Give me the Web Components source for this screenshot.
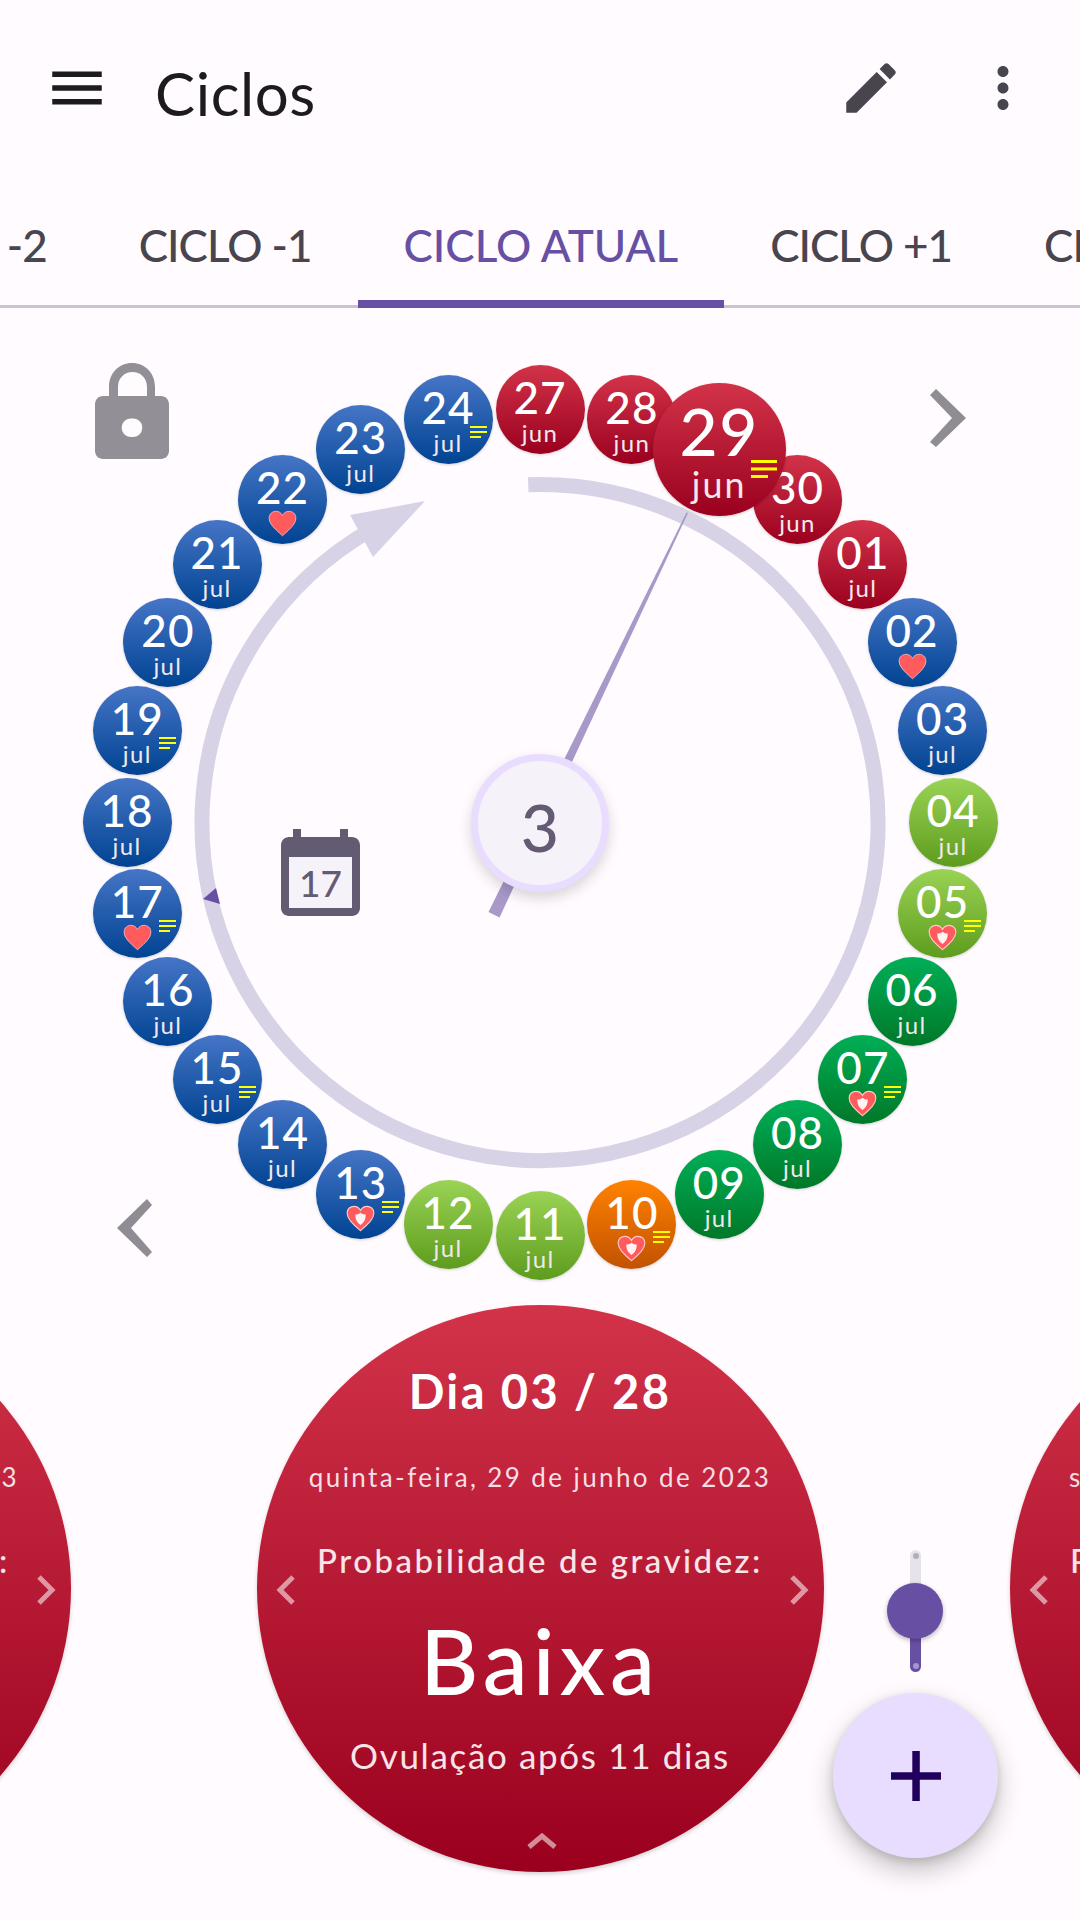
<!DOCTYPE html>
<html lang="pt"><head><meta charset="utf-8"><title>Ciclos</title>
<style>
html,body{margin:0;padding:0;background:#fffbfe}
body{width:1080px;height:1920px;overflow:hidden;font-family:"Lato","Noto Sans",sans-serif;display:flex;flex-direction:column}
</style></head><body>
<app-bar title="Ciclos"></app-bar>
<cycle-tabs></cycle-tabs>
<cycle-wheel></cycle-wheel>
<day-carousel></day-carousel>
<script>
const P={red:['#d23349','#9a001e'],blue:['#4675c6','#004392'],lime:['#9ad355','#5e9c1d'],green:['#00af57','#007828'],orange:['#ff8200','#c25200']};
function def(n,html,extra){customElements.define(n,class extends HTMLElement{constructor(){super();this.attachShadow({mode:'open'});}connectedCallback(){if(this._r)return;this._r=1;this.shadowRoot.innerHTML=typeof html==='function'?html(this):html;extra&&extra(this)}})}

def('app-bar',`<style>:host{display:flex;align-items:flex-start;height:165px;flex:none;position:relative;color:#1c1b1f}
.b{width:66px;height:66px;margin-top:55px;flex:none}svg{display:block;width:66px;height:66px}
h1{margin:54px 0 0 45px;font:400 60px/78px Lato,sans-serif;letter-spacing:.6px;flex:1}
</style>
<div class="b" style="margin-left:44px"><svg viewBox="0 0 24 24" fill="#1c1b1f"><path d="M3 18h18v-2H3v2zm0-5h18v-2H3v2zm0-7v2h18V6H3z"/></svg></div>
<h1>Ciclos</h1>
<div class="b"><svg viewBox="0 0 24 24" fill="#49454f"><path d="M3 17.25V21h3.75L17.81 9.94l-3.75-3.75L3 17.25zM20.71 7.04c.39-.39.39-1.02 0-1.41l-2.34-2.34c-.39-.39-1.02-.39-1.41 0l-1.83 1.83 3.75 3.75 1.83-1.83z"/></svg></div>
<div class="b" style="margin:55px 44px 0 66px"><svg viewBox="0 0 24 24" fill="#49454f"><path d="M12 8c1.1 0 2-.9 2-2s-.9-2-2-2-2 .9-2 2 .9 2 2 2zm0 2c-1.1 0-2 .9-2 2s.9 2 2 2 2-.9 2-2-.9-2-2-2zm0 6c-1.1 0-2 .9-2 2s.9 2 2 2 2-.9 2-2-.9-2-2-2z"/></svg></div>`);

def('tab-item',t=>`<style>:host{display:flex;flex:none;align-items:center;height:143px;padding:17px 46px 0;box-sizing:border-box;font:500 44px/1 Lato,sans-serif;color:#49454f;position:relative;white-space:nowrap;letter-spacing:-1px}
:host([active]){color:#6750a4;letter-spacing:0}
:host([active])::after{content:"";position:absolute;left:0;right:0;bottom:0;height:8px;background:#6750a4}
</style><slot></slot>`);

def('cycle-tabs',`<style>:host{display:flex;justify-content:center;flex:none;height:143px;box-sizing:border-box;overflow:hidden;position:relative}
:host::before{content:"";position:absolute;left:0;right:0;bottom:0;height:3px;background:#cac4d0}
.r{display:flex;flex:none;height:143px;position:relative;margin-left:20px}
</style><div class="r"><tab-item>CICLO -2</tab-item><tab-item>CICLO -1</tab-item><tab-item active>CICLO ATUAL</tab-item><tab-item>CICLO +1</tab-item><tab-item>CICLO +2</tab-item></div>`);

const HEART="M50 88 C20 62 4 46 4 27 C4 12 16 4 27 4 C37 4 45 9 50 18 C55 9 63 4 73 4 C84 4 96 12 96 27 C96 46 80 62 50 88Z";
def('day-node',t=>{
 const [a,b]=P[t.getAttribute('tone')||'red'],big=t.hasAttribute('big'),s=big?1.494:1,mark=t.getAttribute('mark')||'',lines=t.hasAttribute('lines');
 const d=89*s;
 let m='';
 if(mark==='heart')m=`<svg class="h" viewBox="0 0 100 92"><path d="${HEART}" fill="#ff5a5c" stroke="#f4b9bc" stroke-width="3"/></svg>`;
 else if(mark==='shield')m=`<svg class="h" viewBox="0 0 100 92"><path d="${HEART}" fill="#ff5a5c" stroke="#ffc9cb" stroke-width="4"/><path d="M50 26 C57 31 63 32 68 32 C68 50 62 60 50 68 C38 60 32 50 32 32 C37 32 43 31 50 26Z" fill="#fff" opacity=".92"/></svg>`;
 return `<style>:host{position:absolute;display:block;width:${d}px;height:${d}px;margin:${-d/2}px 0 0 ${-d/2}px;border-radius:50%;background:linear-gradient(${a},${b});box-shadow:0 1px 3px rgba(0,0,0,.18);color:#fff;font-family:Lato,sans-serif;z-index:${big?3:1}}
.n{position:absolute;left:0;right:0;top:${9*s}px;text-align:center;font:500 ${44*s}px/${46*s}px Lato,sans-serif;letter-spacing:${1*s}px}
.m{position:absolute;left:0;right:0;top:${55*s}px;text-align:center;font:400 ${24*s}px/${26*s}px Lato,sans-serif;letter-spacing:${1.4*s}px;color:#f1e8ec}
.h{position:absolute;left:${30*s}px;top:${55*s}px;width:${29*s}px;height:${27*s}px}
.l{position:absolute;left:${66*s}px;top:${51*s}px;width:${17*s}px;height:${2*s}px;background:#ff0;box-shadow:0 ${5*s}px 0 #ff0}
.l::after{content:"";position:absolute;left:0;top:${10*s}px;width:${11*s}px;height:${2*s}px;background:#ff0}
</style><div class="n"><slot></slot></div>${mark?'':`<div class="m">${t.getAttribute('month')||''}</div>`}${m}${lines?'<div class="l"></div>':''}`;
});

function arc(r,a0,a1,cx,cy){const p=a=>[cx+r*Math.sin(a*Math.PI/180),cy-r*Math.cos(a*Math.PI/180)];const [x0,y0]=p(a0),[x1,y1]=p(a1);return `M${x0} ${y0}A${r} ${r} 0 1 1 ${x1} ${y1}`}

const CX=540,CY=514.5;
def('cycle-wheel',`<style>:host{display:block;position:relative;flex:none;height:997px}
svg.bg{position:absolute;left:0;top:0;width:1080px;height:997px}
.hub{position:absolute;left:471px;top:445.5px;width:138px;height:138px;box-sizing:border-box;padding-top:8px;border-radius:50%;border:7px solid #e9ddff;background:#f5f2fa;box-shadow:0 6px 14px rgba(0,0,0,.16);display:flex;align-items:center;justify-content:center;color:#645a73;font:500 66px/1 Lato,sans-serif;z-index:2}
.cal{position:absolute;left:281px;top:521px;width:79px;height:87px}
.calt{position:absolute;left:289px;top:549px;width:63px;height:51px;display:flex;align-items:center;justify-content:center;font:500 37px/1 Lato,sans-serif;color:#625b71}
.ov{position:absolute}
</style>
<svg class="bg" viewBox="0 0 1080 997">
<path d="${arc(338,-2,329.8,CX,CY)}" fill="none" stroke="#d8d2e7" stroke-width="15"/>
<polygon points="425,193 350,207 373,249" fill="#d8d2e7"/>
<polygon points="203,591 216,580 220,596" fill="#6750a4"/>
<polygon points="488.5,604 499.5,609.5 688,205 686.5,204.5" fill="#a899c9"/>
<polygon points="936,81 930,87 952,110 930,134 936,139 966,110" fill="#8f8d93"/>
<polygon points="147,891 152,897 131,920 152,944 147,949 117,920" fill="#8f8d93"/>
</svg>
<svg class="ov" style="left:95px;top:55px;width:74px;height:96px" viewBox="0 0 74 96"><path fill-rule="evenodd" fill="#929096" d="M14 33V24C14 10 24 0 37 0S60 10 60 24V33H66C70.400 33 74 36.600 74 41V88C74 92.400 70.400 96 66 96H8C3.600 96 0 92.400 0 88V41C0 36.600 3.600 33 8 33ZM23 33H52V24C52 15 45.500 9 37.500 9S23 15 23 24ZM37 55.500A9.300 9.300 0 1 0 37 74A9.300 9.300 0 1 0 37 55.500Z"/></svg>
<svg class="cal" viewBox="0 0 79 87"><path fill="#625b71" d="M12 8V0H20V8H59V0H67V8H71C75.400 8 79 11.600 79 16V79C79 83.400 75.400 87 71 87H8C3.600 87 0 83.400 0 79V16C0 11.600 3.600 8 8 8Z"/><rect x="8" y="28" width="63" height="51" fill="#f5f2fa"/></svg>
<div class="calt">17</div>
<div class="hub">3</div>
<div id="n"></div>`,t=>{
 const host=t.shadowRoot.getElementById('n');
 const D=[['27','jun','red'],['28','jun','red'],['29','jun','red','','l',1],['30','jun','red'],['01','jul','red'],['02','jul','blue','heart'],['03','jul','blue'],['04','jul','lime'],['05','jul','lime','shield','l'],['06','jul','green'],['07','jul','green','shield','l'],['08','jul','green'],['09','jul','green'],['10','jul','orange','shield','l'],['11','jul','lime'],['12','jul','lime'],['13','jul','blue','shield','l'],['14','jul','blue'],['15','jul','blue','','l'],['16','jul','blue'],['17','jul','blue','heart','l'],['18','jul','blue'],['19','jul','blue','','l'],['20','jul','blue'],['21','jul','blue'],['22','jul','blue','heart'],['23','jul','blue'],['24','jul','blue','','l']];
 D.forEach((d,i)=>{const e=document.createElement('day-node');e.setAttribute('month',d[1]);e.setAttribute('tone',d[2]);if(d[3])e.setAttribute('mark',d[3]);if(d[4])e.setAttribute('lines','');if(d[5])e.setAttribute('big','');e.textContent=d[0];
  const a=i*2*Math.PI/28;e.style.left=(CX+413*Math.sin(a))+'px';e.style.top=(CY-0.5-413*Math.cos(a))+'px';host.appendChild(e);});
});

const chev=(d)=>`<svg viewBox="0 0 20 30" style="width:20px;height:30px;display:block"><path d="${d}" fill="none" stroke="#fff" stroke-opacity=".55" stroke-width="5"/></svg>`;
def('day-disc',t=>`<style>:host{display:block;position:relative;flex:none;width:567px;height:567px;border-radius:50%;background:linear-gradient(#d23349,#9a001e);box-shadow:0 2px 4px rgba(0,0,0,.18);color:#fff;text-align:center;font-family:Lato,sans-serif}
div{position:absolute;left:0;right:0;white-space:nowrap}
.a{top:56px;font:700 47px/60px Lato,sans-serif;letter-spacing:2.4px}
.b{top:155px;font:400 26px/34px Lato,sans-serif;letter-spacing:2.4px;color:#f6dfe4}
.c{top:235px;font:500 33px/40px Lato,sans-serif;letter-spacing:2.5px;color:#f9e4e8}
.d{top:300px;font:500 90px/110px Lato,sans-serif;letter-spacing:5px}
.e{top:429px;font:400 35px/42px Lato,sans-serif;letter-spacing:1.65px;color:#f9e4e8}
.l{left:19px;right:auto;top:270px}.r{left:auto;right:15px;top:270px}
.u{left:270px;right:auto;top:528px}
</style><div class="a">${t.getAttribute('a')}</div><div class="b">${t.getAttribute('b')}</div><div class="c">Probabilidade de gravidez:</div><div class="d">Baixa</div><div class="e">${t.getAttribute('e')}</div>
<div class="l">${chev('M17 2 L4 15 L17 28')}</div><div class="r">${chev('M3 2 L16 15 L3 28')}</div>${t.hasAttribute('up')?`<div class="u"><svg viewBox="0 0 30 16" style="width:30px;height:16px;display:block"><path d="M2 14 L15 3 L28 14" fill="none" stroke="#fff" stroke-opacity=".55" stroke-width="5"/></svg></div>`:''}`);

def('level-slider',`<style>:host{position:absolute;left:887px;top:245px;width:56px;height:122px;display:block}
.t{position:absolute;left:23px;width:11px;border-radius:6px}
.d{position:absolute;left:25.500px;width:6px;height:6px;border-radius:50%}
.k{position:absolute;left:0;top:33px;width:56px;height:56px;border-radius:50%;background:#6750a4;box-shadow:0 2px 5px rgba(0,0,0,.28)}
</style><div class="t" style="top:0;height:60px;background:#e6e3eb"></div><div class="t" style="top:60px;height:62px;background:#6750a4"></div>
<div class="d" style="top:3px;background:#b3afba"></div><div class="d" style="bottom:3px;background:#a596cf"></div><div class="k"></div>`);

def('add-fab',`<style>:host{position:absolute;left:833px;top:388px;width:165px;height:165px;border-radius:50%;background:#e9ddff;box-shadow:0 12px 26px rgba(0,0,0,.24),0 3px 8px rgba(0,0,0,.12);display:flex;align-items:center;justify-content:center}
</style><svg viewBox="0 0 50 50" width="50" height="50"><path d="M21.300 0h7.500v21.300H50v7.500H28.800V50h-7.500V28.800H0v-7.500h21.300z" fill="#21005d"/></svg>`);

def('day-carousel',`<style>:host{display:block;position:relative;flex:1;overflow:hidden}
.r{display:flex;justify-content:center;gap:186px}
</style><div class="r">
<day-disc a="Dia 02 / 28" b="quarta-feira, 28 de junho de 2023" e="Ovulação após 12 dias"></day-disc>
<day-disc up a="Dia 03 / 28" b="quinta-feira, 29 de junho de 2023" e="Ovulação após 11 dias"></day-disc>
<day-disc a="Dia 04 / 28" b="sexta-feira, 30 de junho de 2023" e="Ovulação após 10 dias"></day-disc>
</div><level-slider></level-slider><add-fab></add-fab>`);
</script>
</body></html>
